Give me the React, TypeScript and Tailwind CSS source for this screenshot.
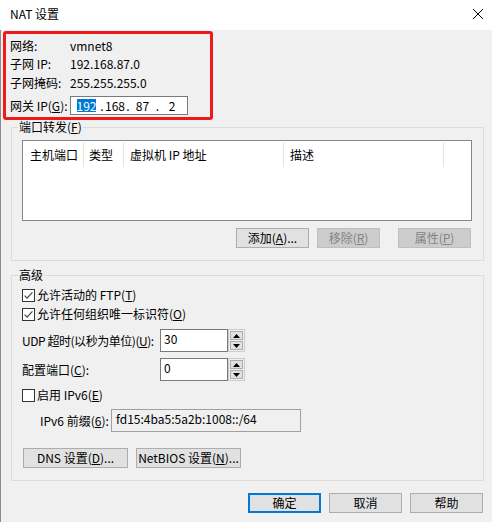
import React from "react";

const F = "font-['Noto_Sans_CJK_SC',sans-serif]";

function U({ c }: { c: string }) {
  return <span className="underline decoration-1 underline-offset-[1px]">{c}</span>;
}

function Box({ checked }: { checked?: boolean }) {
  return (
    <svg width="13" height="13" viewBox="0 0 13 13" className="shrink-0">
      <rect x="0.5" y="0.5" width="12" height="12" fill="#fff" stroke="#333" />
      {checked && (
        <path d="M2.6 6.6 L5.1 9.1 L10.4 3.4" fill="none" stroke="#444" strokeWidth="1.2" />
      )}
    </svg>
  );
}

function Btn({
  w,
  children,
  disabled,
  def,
}: {
  w: string;
  children: React.ReactNode;
  disabled?: boolean;
  def?: boolean;
}) {
  const look = disabled
    ? "border border-[#bfbfbf] bg-[#cccccc] text-[#838383]"
    : def
    ? "border-2 border-[#0078d7] bg-[#e1e1e1]"
    : "border border-[#adadad] bg-[#e1e1e1]";
  return (
    <div className={`${w} h-[20px] flex items-center justify-center shrink-0 whitespace-nowrap ${look}`}>
      {children}
    </div>
  );
}

function Spinner() {
  return (
    <div className="w-[17px] h-[23px] flex flex-col gap-[1px] p-[1px] border border-[#cccccc] bg-[#f0f0f0]">
      <div className="flex-1 border border-[#adadad] bg-[#e1e1e1] flex items-center justify-center">
        <svg width="7" height="4" viewBox="0 0 7 4">
          <polygon points="0,4 3.5,0 7,4" fill="#000" />
        </svg>
      </div>
      <div className="flex-1 border border-[#adadad] bg-[#e1e1e1] flex items-center justify-center">
        <svg width="7" height="4" viewBox="0 0 7 4">
          <polygon points="0,0 7,0 3.5,4" fill="#000" />
        </svg>
      </div>
    </div>
  );
}

export default function App() {
  return (
    <div className={`w-[492px] h-[522px] flex flex-col text-[12px] leading-[16px] text-black ${F}`}>
      {/* title bar */}
      <div className="h-[30px] shrink-0 bg-white flex justify-between items-start">
        <span className="ml-[10px] mt-[6px]">NAT 设置</span>
        <svg className="mt-[9px] mr-[9px]" width="10" height="10" viewBox="0 0 10 10">
          <path d="M0 0 L10 10 M10 0 L0 10" stroke="#000" strokeWidth="1" />
        </svg>
      </div>

      {/* body */}
      <div className="flex-1 bg-[#f0f0f0] flex flex-col shadow-[inset_1px_0_0_#8c8c8c]">
        {/* info (red annotated box) */}
        <div className="mt-[1px] ml-[3px] w-[210px] h-[89px] border-[3px] border-[#f01818] rounded-[3px] flex flex-col">
          <div className="mt-[3px] h-[18px] flex items-center">
            <span className="w-[64px] pl-[4px]">网络:</span>
            <span>vmnet8</span>
          </div>
          <div className="h-[18px] flex items-center">
            <span className="w-[64px] pl-[4px]">子网 IP:</span>
            <span>192.168.87.0</span>
          </div>
          <div className="mt-[1px] h-[18px] flex items-center">
            <span className="w-[64px] pl-[4px]">子网掩码:</span>
            <span>255.255.255.0</span>
          </div>
          <div className="mt-[4px] h-[19px] flex items-center">
            <span className="w-[64px] pl-[4px] whitespace-nowrap">
              网关 IP(<U c="G" />):
            </span>
            <div className="w-[118px] h-[19px] border border-[#7a7a7a] bg-white flex items-center pl-[2px]">
              <span className="w-[27px] flex justify-center">
                <span className="bg-[#0078d7] text-white leading-[13px]">192</span>
              </span>
              <span className="w-[4px] flex justify-center">.</span>
              <span className="w-[22px] text-center">168</span>
              <span className="w-[4px] flex justify-center">.</span>
              <span className="w-[25px] text-center">87</span>
              <span className="w-[5px] flex justify-center">.</span>
              <span className="w-[24px] text-center">2</span>
            </div>
          </div>
        </div>

        {/* port forwarding group */}
        <fieldset className="mt-[-1px] ml-[11px] w-[473px] h-[142px] border border-[#dcdcdc]">
          <legend className="ml-[6px] px-[1px] leading-[16px]">
            端口转发(<U c="F" />)
          </legend>
          <div className="mt-[5px] ml-[10px] w-[450px] h-[81px] border border-[#828790] bg-white">
            <div className="mt-[1px] h-[25px] flex">
              <div className="w-[61px] pl-[7px] border-r border-[#e5e5e5] flex items-center">主机端口</div>
              <div className="w-[40px] pl-[5px] border-r border-[#e5e5e5] flex items-center">类型</div>
              <div className="w-[160px] pl-[6px] border-r border-[#e5e5e5] flex items-center">虚拟机 IP 地址</div>
              <div className="w-[160px] pl-[6px] border-r border-[#e5e5e5] flex items-center">描述</div>
            </div>
          </div>
          <div className="mt-[7px] mr-[12px] flex justify-end">
            <Btn w="w-[73px]">
              添加(<U c="A" />)...
            </Btn>
            <div className="w-[8px]" />
            <Btn w="w-[63px]" disabled>
              移除(<U c="R" />)
            </Btn>
            <div className="w-[18px]" />
            <Btn w="w-[73px]" disabled>
              属性(<U c="P" />)
            </Btn>
          </div>
        </fieldset>

        {/* advanced group */}
        <fieldset className="mt-[6px] ml-[11px] w-[473px] h-[214px] border border-[#dcdcdc]">
          <legend className="ml-[6px] px-[1px] leading-[16px]">高级</legend>
          <div className="mt-[4px] ml-[10px] h-[16px] flex items-center gap-[2px]">
            <Box checked />
            <span>
              允许活动的 FTP(<U c="T" />)
            </span>
          </div>
          <div className="mt-[3px] ml-[10px] h-[16px] flex items-center gap-[2px]">
            <Box checked />
            <span>
              允许任何组织唯一标识符(<U c="O" />)
            </span>
          </div>
          <div className="mt-[7px] ml-[10px] h-[23px] flex items-center">
            <span className="w-[138px] shrink-0 whitespace-nowrap tracking-[-0.45px]">
              UDP 超时(以秒为单位)(<U c="U" />):
            </span>
            <div className="w-[68px] h-[23px] border border-[#7a7a7a] bg-white pl-[3px] pt-[1px]">30</div>
            <Spinner />
          </div>
          <div className="mt-[6px] ml-[10px] h-[23px] flex items-center">
            <span className="w-[138px] shrink-0 whitespace-nowrap">
              配置端口(<U c="C" />):
            </span>
            <div className="w-[68px] h-[23px] border border-[#7a7a7a] bg-white pl-[3px] pt-[1px]">0</div>
            <Spinner />
          </div>
          <div className="mt-[6px] ml-[10px] h-[16px] flex items-center gap-[2px]">
            <Box />
            <span>
              启用 IPv6(<U c="E" />)
            </span>
          </div>
          <div className="mt-[6px] ml-[28px] h-[23px] flex items-center">
            <span className="w-[71px] shrink-0 whitespace-nowrap">
              IPv6 前缀(<U c="6" />):
            </span>
            <div className="w-[190px] h-[23px] border border-[#a0a0a0] bg-[#f0f0f0] pl-[4px] pt-[1px]">
              fd15:4ba5:5a2b:1008::/64
            </div>
          </div>
          <div className="mt-[16px] ml-[11px] flex gap-[8px]">
            <Btn w="w-[105px]">
              DNS 设置(<U c="D" />)...
            </Btn>
            <Btn w="w-[105px]">
              NetBIOS 设置(<U c="N" />)...
            </Btn>
          </div>
        </fieldset>

        {/* dialog buttons */}
        <div className="mt-[12px] pr-[9px] flex justify-end gap-[8px]">
          <Btn w="w-[73px]" def>
            确定
          </Btn>
          <Btn w="w-[73px]">取消</Btn>
          <Btn w="w-[73px]">帮助</Btn>
        </div>
      </div>
    </div>
  );
}
